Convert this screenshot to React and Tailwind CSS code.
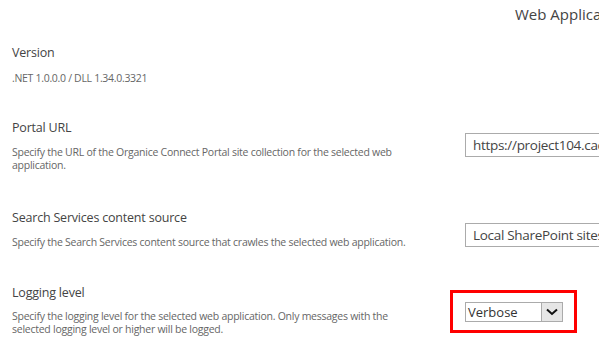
import React from "react";

const sections = [
  {
    title: "Portal URL",
    desc: "Specify the URL of the Organice Connect Portal site collection for the selected web application.",
    value: "https://project104.cacadu.local/sites/portal",
  },
  {
    title: "Search Services content source",
    desc: "Specify the Search Services content source that crawles the selected web application.",
    value: "Local SharePoint sites",
  },
];

const Chevron = () => (
  <svg width="12" height="8" viewBox="0 0 12 8" fill="none">
    <path d="M1 1.5 L6 6 L11 1.5" stroke="#111" strokeWidth="2" />
  </svg>
);

const App = () => {
  return (
    <div
      className="w-[599px] h-[345px] overflow-hidden bg-white"
      style={{ fontFamily: '"Open Sans", "Noto Sans", sans-serif' }}
    >
      <div className="w-[760px]">
        <div className="pl-[515px] pt-[4px] h-[40px] text-[15px] leading-[20px] text-[#444] whitespace-nowrap">
          Web Application Settings
        </div>

        <div className="pl-[12px]">
          <div className="text-[12.5px] leading-[18px] text-[#444] pt-[4px] tracking-[-0.2px]">Version</div>
          <div className="text-[10.5px] leading-[14px] text-[#666] mt-[9px] tracking-[-0.3px]">
            .NET 1.0.0.0 / DLL 1.34.0.3321
          </div>
        </div>

        {sections.map((s, i) => (
          <div key={s.title} className={i === 0 ? "mt-[34px]" : "mt-[37px]"}>
            <div className="pl-[12px] text-[12.5px] leading-[18px] text-[#444] tracking-[-0.2px]">{s.title}</div>
            <div className="flex">
              <div className="w-[465px] shrink-0 pl-[12px] pr-[40px] pt-[9px] text-[10.5px] leading-[13px] text-[#666] tracking-[-0.25px]">
                {s.desc}
              </div>
              <div className="-mt-[4px]">
                <div className="w-[240px] h-[24px] border border-[#ababab] px-[7px] text-[13.5px] leading-[22px] text-[#444] whitespace-nowrap overflow-hidden tracking-[-0.3px]">
                  {s.value}
                </div>
              </div>
            </div>
          </div>
        ))}

        <div className="mt-[35px]">
          <div className="pl-[12px] text-[12.5px] leading-[18px] text-[#444] tracking-[-0.2px]">Logging level</div>
          <div className="flex">
            <div className="w-[450px] shrink-0 pl-[12px] pr-[25px] pt-[8px] text-[10.5px] leading-[13px] text-[#666] tracking-[-0.25px]">
              Specify the logging level for the selected web application. Only messages with the selected logging level or higher will be logged.
            </div>
            <div className="-mt-[12px] w-[127px] h-[43px] shrink-0 border-[3px] border-[#ff0000] pl-[12px] pt-[9px]">
              <div className="flex w-[98px] h-[20px] border border-[#ababab]">
                <div className="flex-1 pl-[2px] text-[13px] leading-[18px] text-[#333]">Verbose</div>
                <div className="w-[21px] h-[18px] bg-[#e6e6e6] border-l border-[#ababab] flex items-center justify-center">
                  <Chevron />
                </div>
              </div>
            </div>
          </div>
        </div>
      </div>
    </div>
  );
};

export default App;
